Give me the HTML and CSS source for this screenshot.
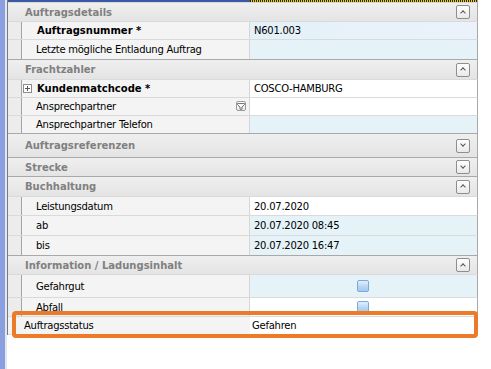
FILE: index.html
```html
<!DOCTYPE html>
<html lang="de">
<head>
<meta charset="utf-8">
<link rel="stylesheet" href="styles.css">
</head>
<body>
<div class="screen">
  <div class="stripe"></div>
  <div class="grid">
    <div class="topbar"><div class="tb-left"></div><div class="tb-right"></div></div>

    <div class="cat h19 first"><span>Auftragsdetails</span><span class="btn up"></span></div>
    <div class="row h18"><div class="ind"></div><div class="hd bold">Auftragsnummer *</div><div class="val blue grad">N601.003</div></div>
    <div class="row h20"><div class="ind"></div><div class="hd">Letzte mögliche Entladung Auftrag</div><div class="val blue"></div></div>

    <div class="cat h20"><span>Frachtzahler</span><span class="btn up"></span></div>
    <div class="row h18"><div class="ind"></div><div class="hd bold"><span class="plus"></span>Kundenmatchcode *</div><div class="val">COSCO-HAMBURG</div></div>
    <div class="row h18"><div class="ind"></div><div class="hd">Ansprechpartner<span class="filter"><svg width="8" height="8" viewBox="0 0 8 8"><path d="M0.5 1.5h7v1.2L5 5v2.2H3V5L0.5 2.7z" fill="none" stroke="#777" stroke-width="1"/></svg></span></div><div class="val"></div></div>
    <div class="row h18"><div class="ind"></div><div class="hd">Ansprechpartner Telefon</div><div class="val blue"></div></div>

    <div class="cat h24"><span>Auftragsreferenzen</span><span class="btn down"></span></div>
    <div class="cat h19"><span>Strecke</span><span class="btn down"></span></div>
    <div class="cat h20"><span>Buchhaltung</span><span class="btn up"></span></div>
    <div class="row h19"><div class="ind"></div><div class="hd">Leistungsdatum</div><div class="val">20.07.2020</div></div>
    <div class="row h20"><div class="ind"></div><div class="hd">ab</div><div class="val blue">20.07.2020 08:45</div></div>
    <div class="row h20"><div class="ind"></div><div class="hd">bis</div><div class="val blue">20.07.2020 16:47</div></div>

    <div class="cat h19"><span>Information / Ladungsinhalt</span><span class="btn up"></span></div>
    <div class="row h23"><div class="ind"></div><div class="hd">Gefahrgut</div><div class="val blue center"><span class="check"></span></div></div>
    <div class="row h19"><div class="ind"></div><div class="hd">Abfall</div><div class="val center"><span class="check"></span></div></div>

    <div class="status h19"><div class="st-label">Auftragsstatus</div><div class="st-val">Gefahren</div></div>
  </div>
  <div class="highlight"></div>
</div>
</body>
</html>
```

FILE: styles.css
```css
html, body {
  margin: 0;
  padding: 0;
  background: #ffffff;
}
body {
  font-family: "DejaVu Sans", Verdana, sans-serif;
  font-size: 10px;
  color: #000;
}
.screen {
  position: relative;
  display: flex;
  width: 491px;
  height: 369px;
  background: #fff;
}
.stripe {
  width: 5px;
  flex: none;
  background: #8a9fe0;
  border-right: 2px solid #e3e6ee;
}
.grid {
  flex: none;
  border-left: 1px solid #7a7a7a;
  display: flex;
  flex-direction: column;
  align-self: flex-start;
  box-sizing: border-box;
  width: 471px;
}
.grid > * { border-right: 1px solid #a8a8a8; }
.topbar {
  height: 2px;
  display: flex;
}
.tb-left { width: 242px; background: #3b5aa6; }
.tb-right {
  flex: 1;
  background: repeating-linear-gradient(90deg, #222 0 1px, #f2d000 1px 2px);
}
.cat {
  display: flex;
  align-items: center;
  justify-content: space-between;
  box-sizing: border-box;
  border-top: 1px solid #a9a9a9;
  background: linear-gradient(#efefef, #e4e4e4);
  font-weight: bold;
  color: #808080;
  padding: 0 7px 0 17px;
}
.cat.first { border-top: 1px solid #d8d8d8; }
.btn {
  width: 14px;
  height: 14px;
  box-sizing: border-box;
  border: 1px solid #8e8e8e;
  border-radius: 2px;
  background: linear-gradient(#ffffff, #e9e9e9);
  position: relative;
}
.btn::after {
  content: "";
  position: absolute;
  left: 4px;
  width: 3px;
  height: 3px;
  border-left: 1.5px solid #555;
  border-top: 1.5px solid #555;
}
.btn.up::after { top: 4.5px; transform: rotate(45deg); }
.btn.down::after { top: 2.5px; transform: rotate(225deg); }

.row {
  display: grid;
  grid-template-columns: 14px 228px 1fr;
  box-sizing: border-box;
  border-top: 1px solid #dadada;
}
.ind {
  background: #ececec;
  border-right: 1px solid #a3a3a3;
}
.hd {
  background: #f4f4f4;
  border-right: 1px solid #d6d6d6;
  padding-left: 14px;
  display: flex;
  align-items: center;
  position: relative;
  white-space: nowrap;
  letter-spacing: -0.25px;
}
.hd.bold { font-weight: bold; letter-spacing: 0; padding-left: 15px; }
.val {
  background: #fff;
  padding-left: 4px;
  display: flex;
  align-items: center;
  white-space: nowrap;
  letter-spacing: -0.25px;
}
.val.blue { background: #e5f3f9; }
.val.grad { background: linear-gradient(90deg, #e3f1f9, #ebf2fb); }
.val.center { justify-content: center; padding-left: 0; padding-right: 0; }

.h18 { height: 18px; }
.h19 { height: 19px; }
.h20 { height: 20px; }
.h23 { height: 23px; }
.h24 { height: 24px; }

.plus {
  position: absolute;
  left: 1px;
  top: 4px;
  width: 9px;
  height: 9px;
  box-sizing: border-box;
  border: 1px solid #8d8d8d;
  background: #fff;
}
.plus::before, .plus::after {
  content: "";
  position: absolute;
  background: #555;
}
.plus::before { left: 1px; top: 3px; width: 5px; height: 1px; }
.plus::after { left: 3px; top: 1px; width: 1px; height: 5px; }

.filter {
  position: absolute;
  right: 3px;
  top: 3px;
  width: 10px;
  height: 10px;
  box-sizing: border-box;
  border: 1px solid #9a9a9a;
  border-radius: 2px;
  background: linear-gradient(#fff, #ececec);
  display: flex;
  align-items: center;
  justify-content: center;
}
.filter svg { display: block; }

.check {
  width: 12px;
  height: 12px;
  box-sizing: border-box;
  border: 1px solid #7aa9da;
  border-radius: 2px;
  background: linear-gradient(#e3effc, #b8d6f3 55%, #a6c9ee);
  margin-left: -2px;
}

.status {
  display: grid;
  grid-template-columns: 242px 1fr;
  box-sizing: border-box;
  border-top: 1px solid #dadada;
  border-bottom: 1px solid #dadada;
}
.st-label {
  background: #f4f4f4;
  padding-left: 16px;
  display: flex;
  align-items: center;
  letter-spacing: -0.25px;
}
.st-val {
  background: #fff;
  padding-left: 2px;
  display: flex;
  align-items: center;
  letter-spacing: -0.25px;
}

.highlight {
  position: absolute;
  left: 12px;
  top: 311px;
  width: 466px;
  height: 27px;
  box-sizing: border-box;
  border: 4px solid #ec7a28;
  border-radius: 4px;
}
```
